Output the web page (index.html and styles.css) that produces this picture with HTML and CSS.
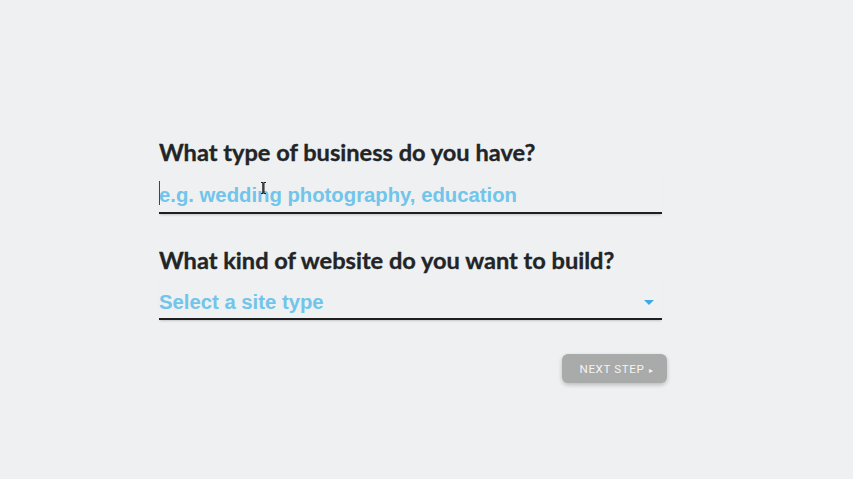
FILE: index.html
```html
<!DOCTYPE html>
<html>
<head>
<meta charset="utf-8">
<link rel="stylesheet" href="styles.css">
</head>
<body>
<main class="page">
  <form class="form">
    <section class="field">
      <h2 class="label">What type of business do you have?</h2>
      <div class="input">
        <span class="caret"></span>
        <span class="placeholder">e.g. wedding photography, education</span>
        <svg class="ibeam" width="7" height="12" viewBox="0 0 7 12"><path d="M1 0.5h2v11H1M6 0.5H4v11h2M3 0.5v11" fill="none" stroke="#222" stroke-width="1"/></svg>
      </div>
    </section>
    <section class="field second">
      <h2 class="label">What kind of website do you want to build?</h2>
      <div class="input select">
        <span class="placeholder">Select a site type</span>
        <svg class="arrow" width="10" height="5" viewBox="0 0 10 5"><path d="M0 0h10L5 5z" fill="#3fa9e6"/></svg>
      </div>
    </section>
    <div class="actions">
      <button type="button" class="next">NEXT STEP <span class="tri">&#9656;</span></button>
    </div>
  </form>
</main>
</body>
</html>
```
FILE: styles.css
```css
html, body {
  margin: 0;
  padding: 0;
  background: #eef0f1;
}
.page {
  width: 853px;
  height: 479px;
  padding-top: 138px;
  padding-left: 159px;
  box-sizing: border-box;
}
.form {
  width: 503px;
  display: flex;
  flex-direction: column;
}
.field {
  display: flex;
  flex-direction: column;
}
.second {
  margin-top: 32px;
}
.label {
  margin: 0;
  font-family: Lato, "Open Sans", sans-serif;
  font-weight: 700;
  font-size: 23.6px;
  line-height: 28px;
  color: #222426;
  -webkit-text-stroke: 0.35px #222426;
}
.input {
  position: relative;
  display: flex;
  align-items: center;
  height: 34px;
  padding-top: 4px;
  margin-top: 8px;
  border-bottom: 2px solid #1d1f20;
  box-shadow: 0 2px 2px -1px rgba(0,0,0,0.18);
}
.placeholder {
  font-family: "Liberation Sans", Arial, sans-serif;
  font-weight: 700;
  font-size: 20.3px;
  color: #71c4ea;
}
.caret {
  position: absolute;
  left: 0;
  top: 7px;
  width: 1px;
  height: 24px;
  background: #444;
}
.ibeam {
  position: absolute;
  left: 101px;
  top: 8px;
}
.select {
  justify-content: space-between;
  margin-top: 6px;
  height: 32px;
  padding-top: 6px;
}
.arrow {
  margin-right: 8px;
}
.actions {
  display: flex;
  justify-content: flex-end;
  margin-top: 34px;
  margin-right: -5px;
}
.next {
  width: 105px;
  height: 29px;
  border: none;
  border-radius: 6px;
  background: #a9aaaa;
  color: #f4f4f4;
  font-family: Roboto, "Liberation Sans", sans-serif;
  font-size: 11.6px;
  letter-spacing: 0.6px;
  line-height: 29px;
  box-shadow: 0 2px 4px rgba(0,0,0,0.22);
  padding: 1px 0 0 4px;
}
.tri {
  font-size: 8px;
  margin-left: 1px;
}
```
